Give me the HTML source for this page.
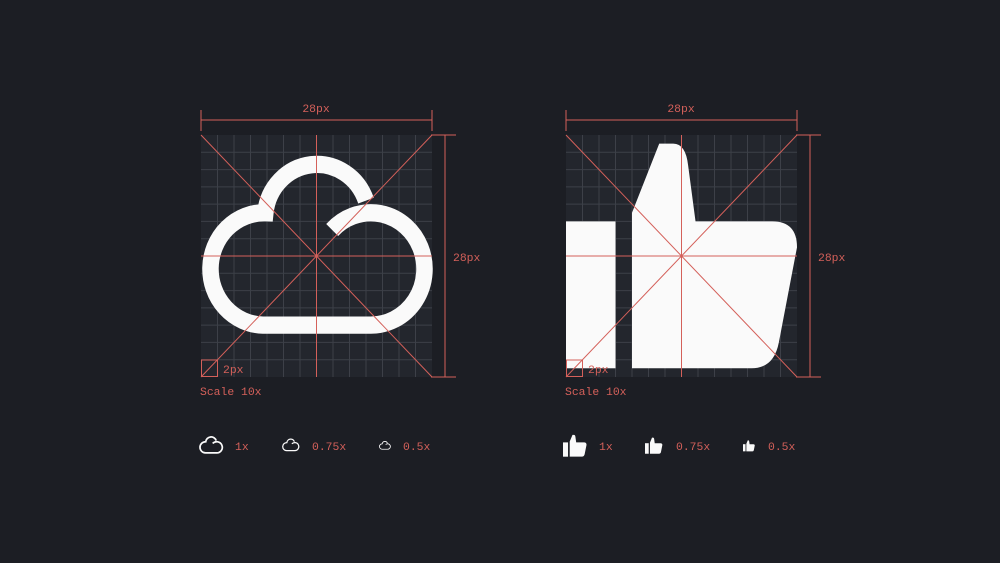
<!DOCTYPE html>
<html><head><meta charset="utf-8"><style>
html,body{margin:0;padding:0;background:#1c1e24;width:1000px;height:563px;overflow:hidden}
svg text{font-family:"Liberation Mono",monospace;font-size:11.4px;fill:#d4605a}
</style></head><body>
<svg width="1000" height="563" viewBox="0 0 1000 563" xmlns="http://www.w3.org/2000/svg">
<defs>
<g id="grid">
  <rect x="0" y="0" width="231" height="242" fill="#23262d"/>
  <g stroke="#3d4048" stroke-width="1">
    <path d="M16.5 0V242M33 0V242M49.5 0V242M66 0V242M82.5 0V242M99 0V242M115.5 0V242M132 0V242M148.5 0V242M165 0V242M181.5 0V242M198 0V242M214.5 0V242"/>
    <path d="M0 17.3H231M0 34.6H231M0 51.9H231M0 69.1H231M0 86.4H231M0 103.7H231M0 121H231M0 138.3H231M0 155.6H231M0 172.9H231M0 190.1H231M0 207.4H231M0 224.7H231"/>
  </g>
</g>
<g id="guides" stroke="#d4605a" stroke-width="1" fill="none">
  <path d="M0 0L231 242M231 0L0 242M115.5 0V242M0 121H231"/>
  <rect x="0.5" y="225" width="16" height="16.5"/>
  <path d="M0 -15H231M0 -25V-4M231 -25V-4"/>
  <path d="M244 0V242M230 0H255M230 242H255"/>
</g>
<path id="cloud" d="M15.9 11 A6.5 6.5 0 1 1 20.5 22 L7.5 22 A6.5 6.5 0 0 1 7.8 9 A6.3 6.3 0 0 1 20 7.6" fill="none" stroke="#fafafa" stroke-width="2"/>
<g id="thumb" fill="#fafafa">
  <rect x="0" y="10" width="6" height="17"/>
  <path d="M8 27V9L11.3 1H13Q14.5 1 14.8 3.5L15.7 10H25Q28 10 28 13L25.8 24Q25.2 27 22.5 27Z"/>
</g>
</defs>

<g transform="translate(201,135)">
  <use href="#grid"/>
  <g transform="scale(8.25,8.64)"><use href="#cloud"/></g>
  <use href="#guides"/>
</g>
<text x="316" y="112" text-anchor="middle">28px</text>
<text x="453" y="261">28px</text>
<text x="223" y="373">2px</text>
<text x="200" y="395">Scale 10x</text>

<g transform="translate(566,135)">
  <use href="#grid"/>
  <g transform="scale(8.25,8.64)"><use href="#thumb"/></g>
  <use href="#guides"/>
</g>
<text x="681" y="112" text-anchor="middle">28px</text>
<text x="818" y="261">28px</text>
<text x="588" y="373">2px</text>
<text x="565" y="395">Scale 10x</text>

<g transform="translate(199,434) scale(0.86)"><use href="#cloud"/></g>
<text x="235" y="450">1x</text>
<g transform="translate(282,437) scale(0.62)"><use href="#cloud"/></g>
<text x="312" y="450">0.75x</text>
<g transform="translate(379,440) scale(0.42)"><use href="#cloud"/></g>
<text x="403" y="450">0.5x</text>

<g transform="translate(563,434) scale(0.84)"><use href="#thumb"/></g>
<text x="599" y="450">1x</text>
<g transform="translate(645,437) scale(0.62)"><use href="#thumb"/></g>
<text x="676" y="450">0.75x</text>
<g transform="translate(743,440) scale(0.42)"><use href="#thumb"/></g>
<text x="768" y="450">0.5x</text>
</svg>
</body></html>
